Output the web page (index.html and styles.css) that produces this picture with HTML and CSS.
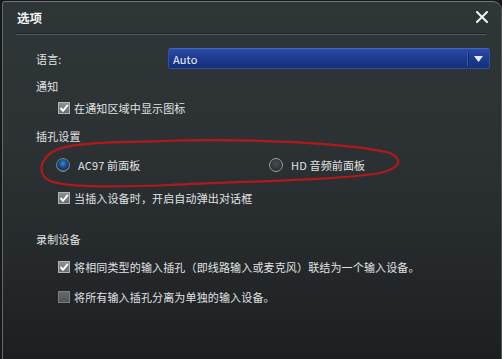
FILE: index.html
```html
<!DOCTYPE html>
<html lang="zh-CN">
<head>
<meta charset="utf-8">
<title>选项</title>
<link rel="stylesheet" href="styles.css">
</head>
<body>
<div class="window">
  <div class="titlebar">
    <span class="title">选项</span>
    <svg class="close" width="12" height="12" viewBox="0 0 12 12"><path d="M1 1 L11 11 M11 1 L1 11" stroke="#f2f2f2" stroke-width="2" stroke-linecap="square" fill="none"/></svg>
  </div>
  <div class="content">
    <div class="row lang">
      <span class="label">语言:</span>
      <div class="select">
        <span class="select-text">Auto</span>
        <span class="select-btn"><svg width="9" height="6" viewBox="0 0 9 6"><path d="M0 0 H9 L4.5 6 Z" fill="#e8ecf4"/></svg></span>
      </div>
    </div>
    <div class="row section g9">通知</div>
    <div class="row item g6"><span class="cb on"><svg width="10" height="10" viewBox="0 0 10 10"><path d="M1.5 5 L4 7.8 L8.8 1.8" stroke="#fff" stroke-width="2" fill="none"/></svg></span>在通知区域中显示图标</div>
    <div class="row section g12">插孔设置</div>
    <div class="row radios g13">
      <span class="radio-opt first"><span class="radio sel"></span>AC97 前面板</span>
      <span class="radio-opt"><span class="radio"></span>HD 音频前面板</span>
    </div>
    <div class="row item g17"><span class="cb on"><svg width="10" height="10" viewBox="0 0 10 10"><path d="M1.5 5 L4 7.8 L8.8 1.8" stroke="#fff" stroke-width="2" fill="none"/></svg></span>当插入设备时，开启自动弹出对话框</div>
    <div class="row section g25">录制设备</div>
    <div class="row item g12"><span class="cb on"><svg width="10" height="10" viewBox="0 0 10 10"><path d="M1.5 5 L4 7.8 L8.8 1.8" stroke="#fff" stroke-width="2" fill="none"/></svg></span>将相同类型的输入插孔（即线路输入或麦克风）联结为一个输入设备。</div>
    <div class="row item g14"><span class="cb"></span>将所有输入插孔分离为单独的输入设备。</div>
  </div>
</div>
<svg class="annot" width="502" height="359" viewBox="0 0 502 359">
  <path d="M160 141 C 250 138, 350 143, 390 153 C 404 160, 400 168, 380 173 C 340 180, 250 181, 170 185 C 120 187, 70 188, 50 181 C 37 175, 38 158, 58 149 C 80 142, 120 142, 165 141" stroke="#b3191b" stroke-width="2.2" fill="none" stroke-linecap="round"/>
</svg>
</body>
</html>
```

FILE: styles.css
```css
html, body {
  margin: 0;
  padding: 0;
}
body {
  width: 502px;
  height: 359px;
  overflow: hidden;
  background: #161819;
  font-family: "Noto Sans CJK SC", "Noto Sans", sans-serif;
  position: relative;
}
.window {
  margin: 1px 0 0 2px;
  height: 358px;
  box-sizing: border-box;
  border-top: 1px solid #70767a;
  border-left: 1px solid #62686b;
  border-right: 1px solid #50565a;
  border-radius: 3px 9px 0 0;
  background: linear-gradient(to bottom, #2f3638 0%, #2c3234 40%, #24282a 75%, #1c1f21 100%);
}
.titlebar {
  height: 31px;
  margin: 0 15px 0 13px;
  border-bottom: 1px solid #1f2426;
  box-shadow: 0 1px 0 #545b5e;
  display: flex;
  align-items: center;
  justify-content: space-between;
}
.title {
  color: #f4f4f4;
  font-size: 12.5px;
  font-weight: bold;
  padding-left: 1px;
  margin-top: -1px;
}
.close {
  margin-right: -2px;
  margin-top: -1px;
}
.content {
  padding: 0 0 0 33px;
  color: #e0e2e2;
  font-size: 11px;
  letter-spacing: 0.15px;
}
.row {
  display: flex;
  align-items: center;
  height: 16px;
  line-height: 16px;
  white-space: nowrap;
}
.lang {
  height: 21px;
  margin-top: 14px;
}
.lang .label {
  width: 132px;
}
.select {
  width: 322px;
  height: 21px;
  box-sizing: border-box;
  border: 1px solid #2f4fa8;
  border-top-color: #4565c0;
  border-radius: 3px;
  background: linear-gradient(to bottom, #2b4ca6 0%, #1d3c92 45%, #142f7a 100%);
  display: flex;
  align-items: center;
  color: #f2f4f8;
}
.select-text {
  flex: 1;
  padding-left: 4px;
}
.select-btn {
  width: 21px;
  height: 15px;
  border-left: 1px solid #3c5aa8;
  box-shadow: inset 1px 0 0 #122a6a;
  display: flex;
  align-items: center;
  justify-content: center;
  margin-left: 0;
}
.g6 { margin-top: 6px; }
.g9 { margin-top: 9px; }
.g12 { margin-top: 12px; }
.g13 { margin-top: 13px; }
.g14 { margin-top: 14px; }
.g17 { margin-top: 17px; }
.g25 { margin-top: 25px; }
.item {
  padding-left: 22px;
}
.cb {
  width: 12px;
  height: 12px;
  box-sizing: border-box;
  margin-right: 4px;
  border: 1px solid #9b9e9f;
  background: linear-gradient(to bottom, #7a7d7e, #5b5e5f);
  display: flex;
  align-items: center;
  justify-content: center;
}
.cb.on {
  border-color: #b0b2b3;
  background: linear-gradient(to bottom, #8d9091, #6a6d6e);
}
.cb:not(.on) {
  border-color: #7c7f80;
  background: linear-gradient(to bottom, #666a6b, #505354);
}
.radios {
  padding-left: 20px;
}
.radio-opt {
  display: flex;
  align-items: center;
}
.radio-opt.first {
  width: 213px;
}
.radio {
  width: 14px;
  height: 14px;
  box-sizing: border-box;
  border-radius: 50%;
  margin-right: 8px;
  border: 1px solid #9a9ea0;
  background: radial-gradient(circle at 50% 40%, #4a4e50 0%, #2c3032 70%, #3d4143 100%);
}
.radio.sel {
  border-color: #7f8588;
  background: radial-gradient(circle at 50% 38%, #3f86c8 0%, #1b5794 35%, #0e3360 62%, #5d6366 72%, #2c3234 100%);
}
.annot {
  position: absolute;
  left: 0;
  top: 0;
  pointer-events: none;
}
```
